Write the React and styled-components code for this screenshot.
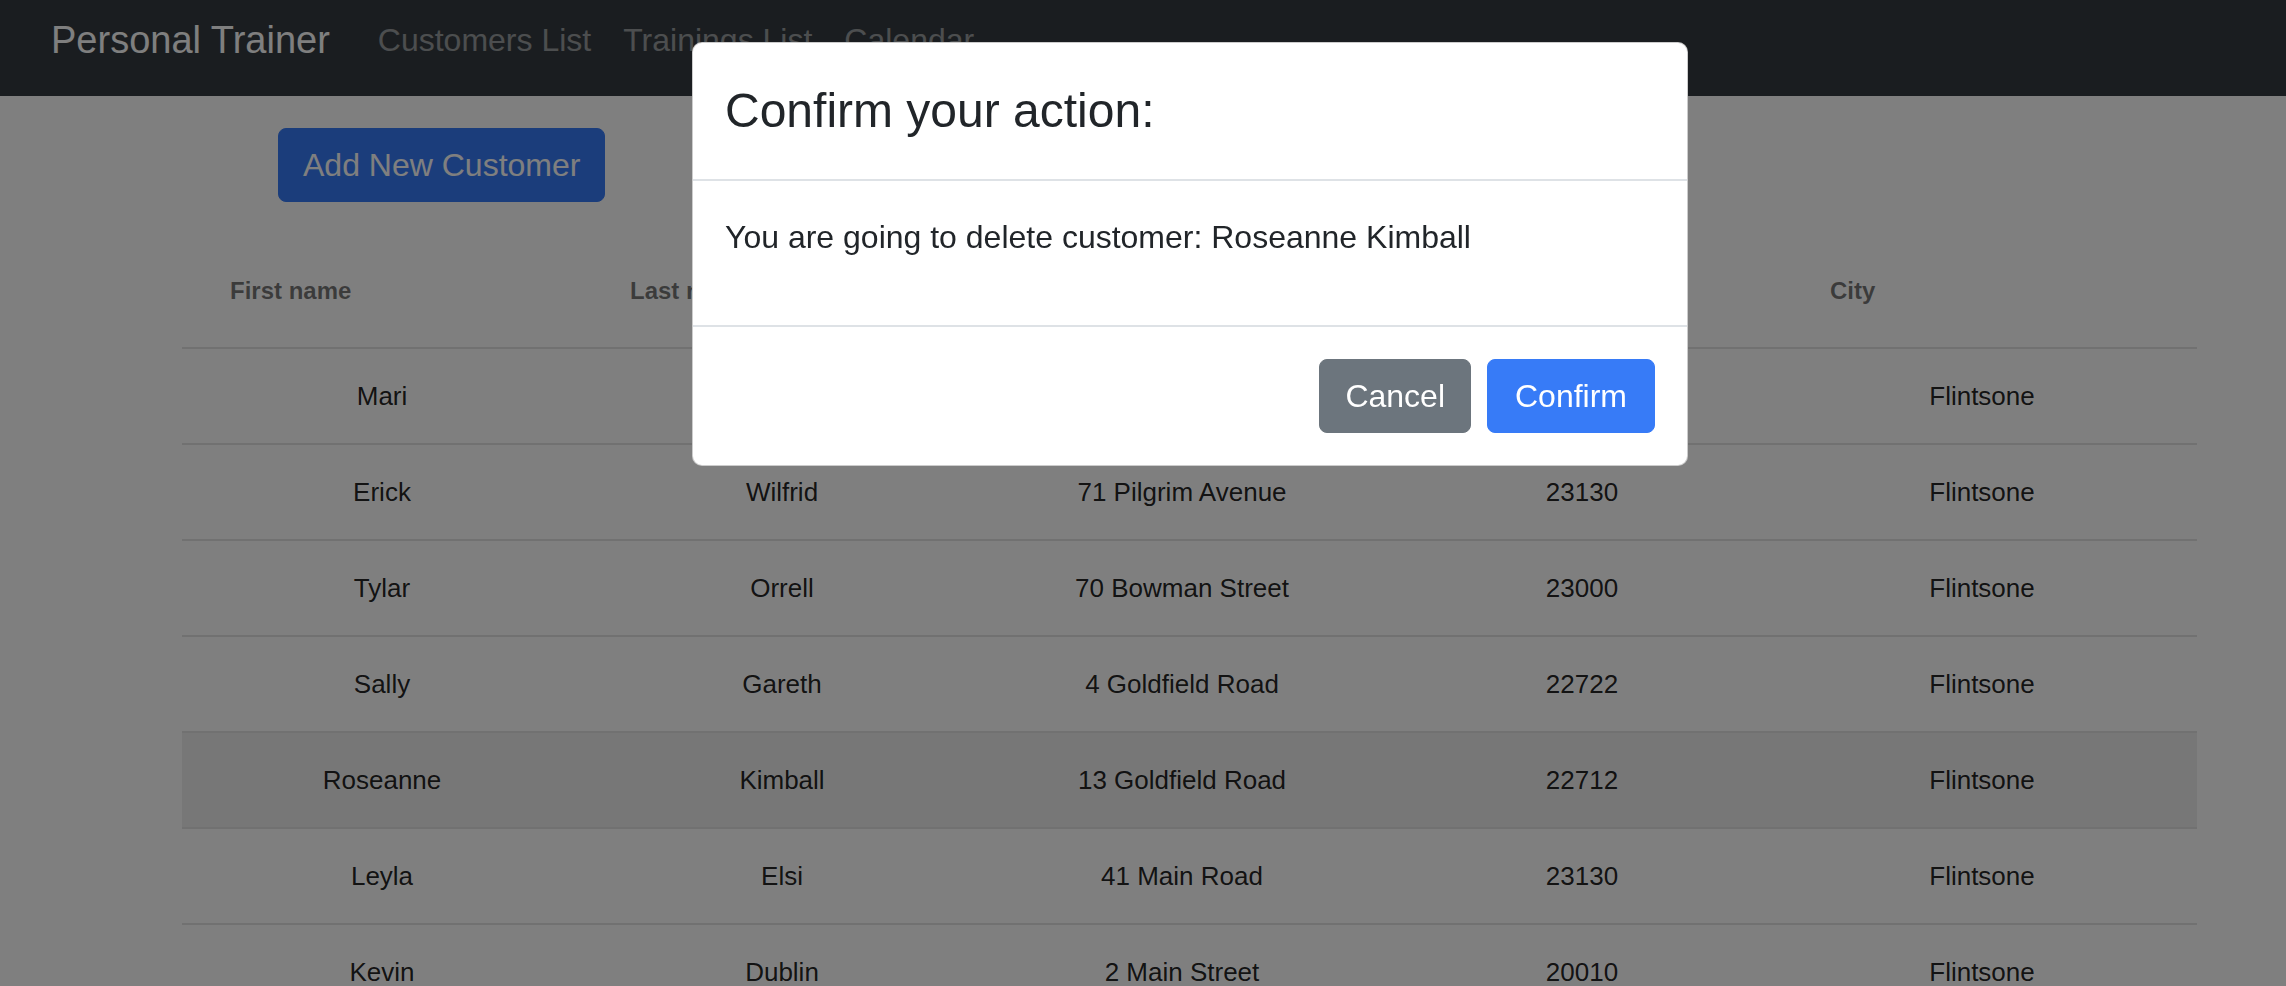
import React from 'react';
import styled, { createGlobalStyle } from 'styled-components';

const GlobalStyle = createGlobalStyle`
  html, body {
    margin: 0;
    padding: 0;
    overflow: hidden;
    background: #fff;
    font-family: "Liberation Sans", Arial, sans-serif;
  }
  * {
    box-sizing: border-box;
  }
`;

const Navbar = styled.nav`
  display: flex;
  align-items: center;
  height: 96px;
  padding: 0 32px 16px 51px;
  background: #343a40;
`;

const Brand = styled.a`
  font-size: 38px;
  line-height: 60px;
  color: #fff;
  margin-right: 32px;
  text-decoration: none;
`;

const NavLink = styled.a`
  font-size: 32px;
  line-height: 48px;
  padding: 0 16px;
  color: rgba(255, 255, 255, 0.5);
  text-decoration: none;
`;

const Main = styled.main`
  padding: 32px 0 0 182px;
`;

const Toolbar = styled.div`
  display: flex;
  padding-left: 96px;
  margin-bottom: 33px;
`;

const Button = styled.button`
  font-family: inherit;
  font-size: 32px;
  line-height: 48px;
  padding: 12px ${(p) => p.$px || 24}px;
  margin: ${(p) => (p.$inFooter ? '8px' : '0')};
  border: 1px solid ${(p) => p.$color};
  border-radius: 8px;
  background: ${(p) => p.$color};
  color: #fff;
  cursor: pointer;
`;

const Grid = styled.div`
  width: 2015px;
  background: #fff;
`;

const HeaderRow = styled.div`
  display: grid;
  grid-template-columns: repeat(5, 400px);
  height: 114px;
  border-bottom: 2px solid #e2e2e2;
`;

const HeaderCell = styled.div`
  display: flex;
  align-items: center;
  padding-left: 48px;
  font-size: 24px;
  font-weight: 700;
  color: rgba(0, 0, 0, 0.54);
`;

const Row = styled.div`
  display: grid;
  grid-template-columns: repeat(5, 400px) 1fr;
  height: 96px;
  border-bottom: 2px solid #e2e2e2;
  background: ${(p) => (p.$hover ? '#eeeeee' : '#fff')};
`;

const Cell = styled.div`
  display: flex;
  align-items: center;
  justify-content: center;
  font-size: 26px;
  color: rgba(0, 0, 0, 0.87);
`;

const Backdrop = styled.div`
  position: fixed;
  inset: 0;
  background: rgba(0, 0, 0, 0.5);
  padding: 42px 0 0 692px;
  z-index: 10;
`;

const Dialog = styled.div`
  width: 996px;
  background: #fff;
  border: 1px solid rgba(0, 0, 0, 0.2);
  border-radius: 10px;
  color: #212529;
`;

const DialogHeader = styled.div`
  padding: 32px;
  border-bottom: 2px solid #dee2e6;
`;

const DialogTitle = styled.h4`
  margin: 0;
  font-size: 48px;
  font-weight: 500;
  line-height: 72px;
`;

const DialogBody = styled.div`
  padding: 32px;
  p {
    margin: 0 0 32px;
    font-size: 32px;
    line-height: 48px;
  }
`;

const DialogFooter = styled.div`
  display: flex;
  justify-content: flex-end;
  padding: 24px;
  border-top: 2px solid #dee2e6;
`;

const columns = ['First name', 'Last name', 'Street address', 'Postcode', 'City'];

const customers = [
  ['Mari', 'Lindqvist', '38 Greenwood Avenue', '23110', 'Flintsone'],
  ['Erick', 'Wilfrid', '71 Pilgrim Avenue', '23130', 'Flintsone'],
  ['Tylar', 'Orrell', '70 Bowman Street', '23000', 'Flintsone'],
  ['Sally', 'Gareth', '4 Goldfield Road', '22722', 'Flintsone'],
  ['Roseanne', 'Kimball', '13 Goldfield Road', '22712', 'Flintsone'],
  ['Leyla', 'Elsi', '41 Main Road', '23130', 'Flintsone'],
  ['Kevin', 'Dublin', '2 Main Street', '20010', 'Flintsone'],
];

export default function App() {
  return (
    <>
      <GlobalStyle />
      <Navbar>
        <Brand href="#">Personal Trainer</Brand>
        <NavLink href="#">Customers List</NavLink>
        <NavLink href="#">Trainings List</NavLink>
        <NavLink href="#">Calendar</NavLink>
      </Navbar>

      <Main>
        <Toolbar>
          <Button $color="#377bf7">Add New Customer</Button>
        </Toolbar>

        <Grid>
          <HeaderRow>
            {columns.map((c) => (
              <HeaderCell key={c}>{c}</HeaderCell>
            ))}
          </HeaderRow>
          {customers.map((row, i) => (
            <Row key={i} $hover={row[0] === 'Roseanne'}>
              {row.map((value, j) => (
                <Cell key={j}>{value}</Cell>
              ))}
            </Row>
          ))}
        </Grid>
      </Main>

      <Backdrop>
        <Dialog>
          <DialogHeader>
            <DialogTitle>Confirm your action:</DialogTitle>
          </DialogHeader>
          <DialogBody>
            <p>You are going to delete customer: Roseanne Kimball</p>
          </DialogBody>
          <DialogFooter>
            <Button $inFooter $px={25} $color="#6c757d">Cancel</Button>
            <Button $inFooter $px={27} $color="#377bf7">Confirm</Button>
          </DialogFooter>
        </Dialog>
      </Backdrop>
    </>
  );
}
